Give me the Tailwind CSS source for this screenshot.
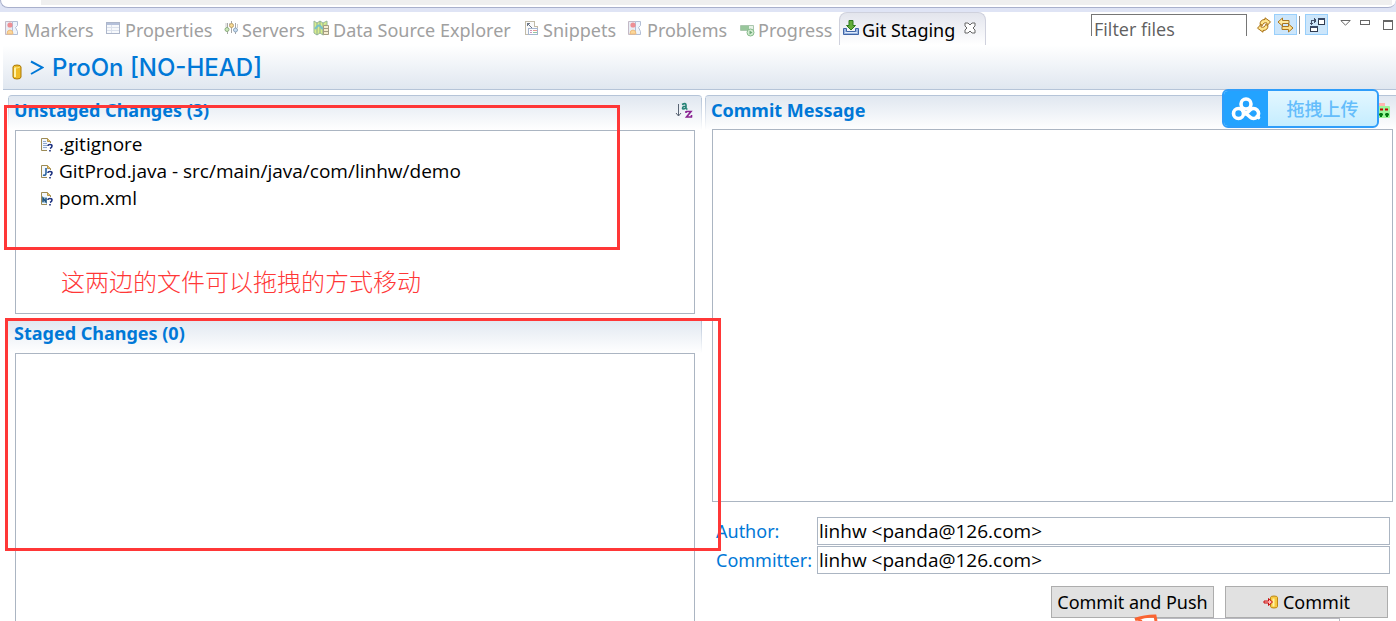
<!DOCTYPE html>
<html lang="en">
<head>
<meta charset="utf-8">
<title>Git Staging</title>
<meta name="viewport" content="width=device-width, initial-scale=1">
<script src="https://cdn.jsdelivr.net/npm/@tailwindcss/browser@4"></script>
</head>
<body class="bg-white">
<svg class="hidden" aria-hidden="true">
  <symbol id="marker" viewBox="0 0 16 16"><path d="M1.500 1.500h7v13h-7z" fill="#e9edf5" stroke="#c3b9c6"/><path d="M8.500 1.500h5v4l-2 2 2 4v3h-5z" fill="#eef4fc" stroke="#b3bfd6"/><circle cx="6" cy="5" r="2.600" fill="#ee8f94"/><path d="M3 14q0-4 3-4t3 4z" fill="#fbd79a" stroke="#eebc7c"/></symbol>
  <symbol id="page" viewBox="0 0 14 16"><path d="M1.500 1.500h6l3 3v9h-9z" fill="#f3f8fe" stroke="#9c8b55"/><path d="M7.500 1.500v3h3" fill="#e5c46d" stroke="#b9954a"/></symbol>
  <symbol id="unknown" viewBox="0 0 14 16"><path d="M7 6h6v9H7z" fill="#fff"/><path d="M8 9V8.500Q8 7.500 10 7.500T12 9t-2 2.500M10 13v1.500" fill="none" stroke="#1d3280" stroke-width="1.600"/></symbol>
</svg>
<div class="relative flex h-screen flex-col overflow-hidden bg-white font-['Noto_Sans','Noto_Sans_CJK_SC',sans-serif] text-[18px] leading-6 text-black">

  <div class="flex h-3 shrink-0 flex-col bg-[#dfe4f5]">
    <div class="flex h-2 rounded-b-lg border-b border-l border-[#a9b0cc] bg-white"><div class="mb-[2px] ml-10 mr-1 flex-1 bg-[#efefef]"></div></div>
  </div>

  <nav class="flex h-[33px] shrink-0 items-stretch justify-between bg-white pl-1">
    <div class="flex items-stretch text-[#a0a0a0]" role="tablist">
      <button role="tab" class="flex w-[101px] items-center gap-1 whitespace-nowrap pt-[2px]"><svg class="mb-1 size-4 shrink-0"><use href="#marker"/></svg>Markers</button>
      <button role="tab" class="flex w-[118px] items-center gap-1 whitespace-nowrap pt-[2px]"><svg class="mb-1 size-4 shrink-0" viewBox="0 0 16 16" shape-rendering="crispEdges"><path d="M1.500 2.500h13v11h-13z" fill="#f7f9fc" stroke="#adb6ca"/><path d="M2 3h12v2H2z" fill="#b4c0da"/><path d="M6.500 5v8M2 7.500h12M2 10.500h12" stroke="#dbe1ec"/></svg>Properties</button>
      <button role="tab" class="flex w-[90px] items-center gap-[3px] whitespace-nowrap pt-[2px]"><svg class="mb-1 size-4 shrink-0" viewBox="0 0 16 16"><path d="M4.500 3v11M8.500 1v12M12.500 3v11" stroke="#a7a7a7"/><path d="M3 3v4M6.500 3v2M14.500 4v4" stroke="#ccc"/><circle cx="4" cy="9.500" r="2" fill="#cbe8b8" stroke="#8cac7f"/><circle cx="8.500" cy="5.500" r="2" fill="#f8da93" stroke="#bca16d"/><circle cx="12.500" cy="10" r="2" fill="#cce0f4" stroke="#8ea6bd"/></svg>Servers</button>
      <button role="tab" class="flex w-[211px] items-center gap-1 whitespace-nowrap pt-[2px]"><svg class="mb-1 size-4 shrink-0" viewBox="0 0 16 16"><path d="M1 1l3 2 3-2 3 2 4-2v12l-4 2-3-2-3 2-3-2z" fill="#d9ee8c" stroke="#96b59a"/><path d="M4 3v12M7 1v12M10 3v12" stroke="#8cad98"/><path d="M2 9q4-6 6-2t5-2" fill="none" stroke="#77c2c8" stroke-width="2"/><path d="M10.500 5.500h5v9h-5z" fill="#f6edcf" stroke="#a49d82"/><path d="M10 8.500h6M10 11.500h6" stroke="#a49d82"/></svg>Data Source Explorer</button>
      <button role="tab" class="flex w-[103px] items-center gap-[3px] whitespace-nowrap pt-[2px]"><svg class="mb-1 size-4 shrink-0" viewBox="0 0 16 16" shape-rendering="crispEdges"><path d="M1.500 14V1.500h9v5h3v8H1.500z" fill="#fafafa" stroke="#c2bba8"/><path d="M4.500 14.500v-6h9v6z" fill="#fff" stroke="#a5b5cf"/><path d="M3 3h3v1H5v1h1v1h1v1h1v1H7V7H6V6H5V5H4v1H3z" fill="#6c7687"/><path d="M6 10.500h2M6 12.500h2" stroke="#cb94bd"/><path d="M9 10.500h4" stroke="#e99b92"/><path d="M9 12.500h4" stroke="#91c7a2"/></svg>Snippets</button>
      <button role="tab" class="flex w-[112px] items-center gap-1 whitespace-nowrap pt-[2px]"><svg class="mb-1 size-4 shrink-0"><use href="#marker"/></svg>Problems</button>
      <button role="tab" class="flex w-[100px] items-center gap-[3px] whitespace-nowrap pt-[2px]"><svg class="size-4 shrink-0" viewBox="0 0 16 16"><path d="M1.500 3.500h13v5h-13z" fill="#e8f3e8" stroke="#aac7ae"/><path d="M2 4h8v4H2z" fill="#98c69b"/><circle cx="11.500" cy="10.500" r="3.500" fill="#d4edd2" stroke="#86ba8b"/><path d="M10.500 8.500v4l3-2z" fill="#6ca878"/></svg>Progress</button>
      <button role="tab" aria-selected="true" class="flex w-[147px] items-center gap-[3px] whitespace-nowrap rounded-t-lg border-x border-t border-[#cfd1dd] bg-linear-to-b from-[#e3e5ed] to-white pl-[3px] pt-[2px] text-black"><svg class="mb-1 size-4 shrink-0" viewBox="0 0 16 16"><path d="M.5 8.500h3v3h9v-3h3v6H.5z" fill="#9bb6e0" stroke="#3f65a7"/><path d="M2 12.500h12" stroke="#dce8fa"/><path d="M6 .5h4v5h2.500L8 10 3.500 5.500H6z" fill="#63ad38" stroke="#2c7a1d"/></svg>Git Staging<svg class="mb-1 ml-[6px] size-3 shrink-0" viewBox="0 0 12 12"><path d="M1 1h3l2 2 2-2h3v3L9 6l2 2v3H8L6 9l-2 2H1V8l2-2-2-2z" fill="#fff" stroke="#666"/></svg></button>
    </div>
    <div class="flex items-start pt-[2px]">
      <input aria-label="Filter files" placeholder="Filter files" class="mr-[9px] h-[22px] w-[156px] border-x border-t border-[#767676] bg-white px-[2px] pt-[6px] font-['Open_Sans',sans-serif] text-[18px] outline-none placeholder:text-[#606060]">
      <button aria-label="Refresh" class="flex h-[22px] w-4 items-center"><svg class="size-4" viewBox="0 0 16 16" fill="#ffe68f" stroke="#a86f13"><path d="M4 7.500Q4 2.500 9 2.500V.8l5.500 4-3.500 4V6Q7 5 6.500 8.500z"/><path d="M12 8.500q0 5-5 5v1.700l-5.500-4 3.500-4V10q4 1 4.500-2.500z"/></svg></button>
      <button aria-label="Link with editor" aria-pressed="true" class="mx-[2px] flex h-[21px] w-[23px] items-center justify-center border border-[#99cffb] bg-[#cce6fb]"><svg class="h-4 w-[17px]" viewBox="0 0 17 16"><path d="M1 5l4.500-4v2.500H12v3H5.500V9z" fill="#ffeaa0" stroke="#a87420"/><path d="M16 11l-4.500-4v2.500H5v3h6.500V15z" fill="#ffdf88" stroke="#a87420"/></svg></button>
      <span class="mt-[2px] h-[18px] w-px bg-[#858585]"></span>
      <button aria-label="Column layout" aria-pressed="true" class="ml-[5px] flex h-[21px] w-[23px] items-center justify-center border border-[#99cffb] bg-[#cce6fb]"><svg class="size-4" viewBox="0 0 16 16" shape-rendering="crispEdges"><path d="M9.500 1.500h6v6h-6zM1.500 9.500h7v5h-7z" fill="#fff" stroke="#303b50"/><path d="M9 1h7v2H9zM1 9h8v2H1z" fill="#394966"/><path d="M2.500 8V3.500H7M5 1v5M6 2v3M1 6h3" fill="none" stroke="#44516b"/></svg></button>
      <button aria-label="View menu" class="ml-3 mt-[6px]"><svg class="h-[7px] w-[11px]" viewBox="0 0 11 7"><path d="M.8.500h9.400L5.500 5.200z" fill="#fff" stroke="#666"/></svg></button>
      <button aria-label="Minimize" class="ml-[9px] mt-[6px] h-[5px] w-[10px] border border-[#666]"></button>
      <button aria-label="Maximize" class="ml-[13px] mr-[3px] mt-[6px] h-[10px] w-[10px] border border-t-2 border-[#666]"></button>
    </div>
  </nav>

  <header class="ml-[3px] flex h-[45px] shrink-0 items-center border-b border-[#b5c4d8] bg-linear-to-b from-white to-[#e0e7f0] pl-[9px] pt-[2px] font-['Inter',sans-serif] text-[24px] font-medium text-[#0078d7]">
    <svg class="mt-2 h-4 w-[10px]" viewBox="0 0 10 16"><path d="M1 3q0-2 4-2t4 2v10q0 2-4 2t-4-2z" fill="#f0bc26" stroke="#a97909"/><path d="M3 4v9" stroke="#fff3a7" stroke-width="2"/><path d="M2 3q3 2 6 0" fill="none" stroke="#fbe47e"/></svg>
    <svg class="mx-2 h-4 w-[14px]" viewBox="0 0 14 16" aria-label="Changed"><path d="M1 1.500L12.500 7.500 1 14" fill="none" stroke="#0078d7" stroke-width="2"/></svg>
    <h1>ProOn [NO-HEAD]</h1>
  </header>

  <main class="mt-[5px] grid min-h-0 flex-1 grid-cols-[694fr_691fr] gap-[3px] pl-2">
    <div class="flex min-h-0 flex-col">
      <section class="relative rounded-t border-t border-[#b5c4d8] bg-linear-to-b from-[#e0e7f0] to-white to-[34px] before:absolute before:left-0 before:top-[2px] before:h-8 before:w-px before:bg-linear-to-b before:from-[#b5c4d8] before:to-white after:absolute after:right-0 after:top-[2px] after:h-8 after:w-px after:bg-linear-to-b after:from-[#b5c4d8] after:to-white">
        <div class="flex h-[34px] items-center justify-between pb-[6px] pl-[6px] pr-[9px]">
          <h2 class="font-bold text-[#0078d7]">Unstaged Changes (3)</h2>
          <button aria-label="Sort"><svg class="h-[18px] w-[18px]" viewBox="0 0 18 18"><path d="M3.500 3v12M1 12l2.500 3L6 12" fill="none" stroke="#596474"/><path d="M7 3.500q4-2 4 .5v4M11 5.500H8.500q-2 2.500 0 2.500 2 0 2.500-1.500M11 8h1.500" fill="none" stroke="#258276" stroke-width="1.600"/><path d="M11 10.500h5L11.500 16H17M11 10v2M16.500 14v2.500" fill="none" stroke="#892391" stroke-width="1.600"/></svg></button>
        </div>
        <ul class="mx-[7px] h-46 border border-[#abb5c2] bg-white pl-6 font-['Open_Sans',sans-serif] text-[19px] leading-[27px]">
          <li class="flex items-center gap-[5px]"><svg class="h-4 w-[14px]" viewBox="0 0 14 16"><use href="#page"/><path d="M3 4.500h3M3 6.500h6M3 8.500h4M3 10.500h4" stroke="#91a9cc"/><use href="#unknown"/></svg>.gitignore</li>
          <li class="flex items-center gap-[5px]"><svg class="h-4 w-[14px]" viewBox="0 0 14 16"><use href="#page"/><path d="M6 4v5q0 3-3 2" fill="none" stroke="#2c659f" stroke-width="1.600"/><use href="#unknown"/></svg>GitProd.java - src/main/java/com/linhw/demo</li>
          <li class="flex items-center gap-[5px]"><svg class="h-4 w-[14px]" viewBox="0 0 14 16"><use href="#page"/><path d="M2 6h6v6H2z" fill="#a7c9dc"/><path d="M3 11V7l3 4V7" fill="none" stroke="#1f527d" stroke-width="1.400"/><use href="#unknown"/></svg>pom.xml</li>
        </ul>
      </section>
      <section class="relative mt-1 flex min-h-0 flex-1 flex-col rounded-t border-t border-[#b5c4d8] bg-linear-to-b from-[#e0e7f0] to-white to-[34px] after:absolute after:right-0 after:top-[2px] after:h-8 after:w-px after:bg-linear-to-b after:from-[#b5c4d8] after:to-white">
        <h2 class="h-[34px] shrink-0 pl-[6px] pt-[2px] font-bold text-[#0078d7]">Staged Changes (0)</h2>
        <ul class="mx-[7px] flex-1 border-x border-t border-[#abb5c2] bg-white"></ul>
      </section>
    </div>

    <section class="relative flex min-h-0 flex-col rounded-tl border-t border-[#b5c4d8] bg-linear-to-b from-[#e0e7f0] to-white to-[34px] before:absolute before:left-0 before:top-[2px] before:h-8 before:w-px before:bg-linear-to-b before:from-[#b5c4d8] before:to-white">
      <div class="flex h-[33px] shrink-0 items-center justify-between pb-[5px] pl-[6px] pr-[6px]">
        <h2 class="font-bold text-[#0078d7]"><label for="message">Commit Message</label></h2>
        <svg class="h-[15px] w-[12px]" viewBox="0 0 12 15"><path d="M0 0h7v3h3v5H0z" fill="#ffb4b0"/><rect y="3" width="12" height="12" rx="1" fill="#9cf79c"/><path d="M2 6.500h3M7 6.500h3" stroke="#c00000" stroke-width="2"/><path d="M1 11.500h4M7 11.500h4M3 10v4M9 10v4" stroke="#007b13" stroke-width="2"/></svg>
      </div>
      <textarea id="message" class="ml-[7px] mr-[3px] min-h-0 flex-1 resize-none border border-[#abb5c2] bg-white outline-none"></textarea>
      <div class="mt-[15px] grid grid-cols-[98px_1fr] items-center gap-x-[3px] gap-y-px pl-[11px] pr-[6px] text-[#0078d7]">
        <label for="author">Author:</label>
        <input id="author" value="linhw &lt;panda@126.com&gt;" class="h-7 border border-[#abb5c2] bg-white px-px font-['Open_Sans',sans-serif] text-[19px] text-black outline-none">
        <label for="committer">Committer:</label>
        <input id="committer" value="linhw &lt;panda@126.com&gt;" class="h-7 border border-[#abb5c2] bg-white px-px font-['Open_Sans',sans-serif] text-[19px] text-black outline-none">
      </div>
      <div class="mb-[3px] mt-3 flex justify-end gap-[11px] pr-2">
        <button class="h-8 w-[163px] whitespace-nowrap border border-[#adadad] bg-[#e1e1e1]">Commit and Push</button>
        <button class="flex h-8 w-[163px] items-center justify-center gap-1 border border-[#adadad] bg-[#e1e1e1]"><svg class="size-4" viewBox="0 0 16 16"><path d="M7.500 3.500q0-1.500 3.500-1.500t3.500 1.500v9q0 1.500-3.500 1.500t-3.500-1.500z" fill="#f7c83e" stroke="#bb8614"/><path d="M10.500 4.500v8" stroke="#fff3a7" stroke-width="2"/><path d="M1 7h4.500V4.500L9.500 8l-4 3.500V9H1z" fill="#fbb" stroke="#c80b0b"/></svg>Commit</button>
      </div>
    </section>
  </main>

  <div class="absolute bottom-0 right-14 h-[3px] w-[183px] border-r border-t border-[#b9b9c0] bg-white"></div>
  <svg class="absolute bottom-0 right-[238px] h-[7px] w-6" viewBox="0 0 24 7"><path d="M1 5.500Q10 2 21 2l1 5" fill="none" stroke="#fa6432" stroke-width="3"/><path d="M2 5l6 2" stroke="#fa6432" stroke-width="2"/></svg>

  <!-- Drag-to-upload widget -->
  <button class="absolute right-[17px] top-[89px] flex h-[39px] w-[157px] items-stretch overflow-hidden rounded-md border-2 border-[#2f9dfa] bg-linear-to-b from-[#e3f7ff] to-[#c5edff] text-[#64bdfb]">
    <span class="flex w-11 items-center justify-center bg-[#23a3ff]"><svg class="h-6 w-[30px]" viewBox="0 0 30 24" fill="none" stroke="#fff" stroke-width="3.600" stroke-linecap="round"><circle cx="15" cy="7" r="5"/><circle cx="7.500" cy="16.500" r="5"/><path d="M11.500 13.500l7.500 6.500a5 5 0 1 0 0-7l-4 4M26 19.500l1.500 1"/></svg></span>
    <span class="flex flex-1 items-center justify-center font-medium">拖拽上传</span>
  </button>

  <!-- Red annotations -->
  <div class="pointer-events-none absolute left-1 top-[105px] h-[145px] w-[616px] border-3 border-[#ff3737]"></div>
  <div class="pointer-events-none absolute left-[5px] top-[318px] h-[233px] w-[716px] border-3 border-[#ff3737]"></div>
  <p class="absolute left-[61px] top-[266px] text-[24px] font-light leading-8 text-[#ff3737]">这两边的文件可以拖拽的方式移动</p>
</div>
</body>
</html>
